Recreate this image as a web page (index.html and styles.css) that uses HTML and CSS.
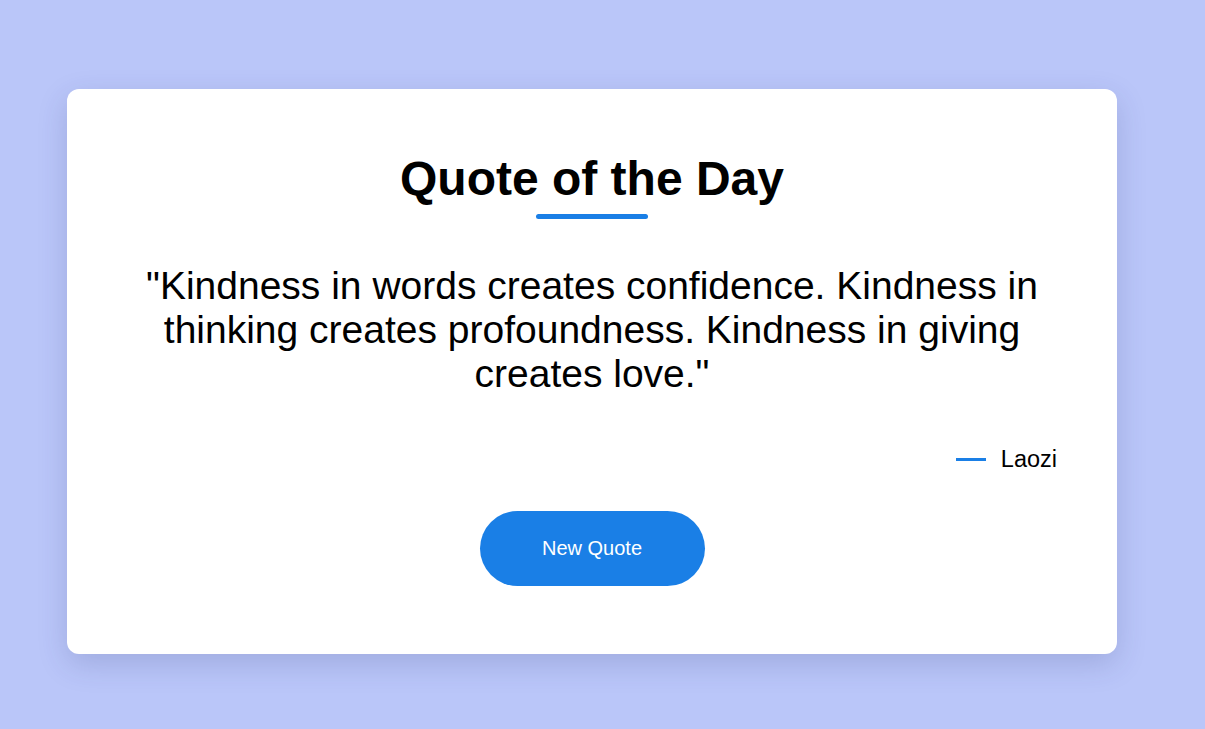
FILE: index.html
```html
<!DOCTYPE html>
<html lang="en">
<head>
<meta charset="utf-8">
<title>Quote of the Day</title>
<link rel="stylesheet" href="styles.css">
</head>
<body>
  <main class="card">
    <h1 class="title">Quote of the Day</h1>
    <p class="quote">"Kindness in words creates confidence. Kindness in thinking creates profoundness. Kindness in giving creates love."</p>
    <p class="author"><span class="dash"></span>Laozi</p>
    <div class="actions">
      <button class="btn" type="button">New Quote</button>
    </div>
  </main>
</body>
</html>
```

FILE: styles.css
```css
* { box-sizing: border-box; }

html, body {
  margin: 0;
  height: 100%;
}

body {
  background: #bac6f9;
  font-family: "Liberation Sans", Arial, sans-serif;
  color: #000;
  display: flex;
  justify-content: center;
  align-items: flex-start;
  padding: 89px 21px 0 0;
}

.card {
  width: 1050px;
  background: #fff;
  border-radius: 12px;
  box-shadow: 0 10px 30px rgba(40, 50, 110, 0.18);
  padding: 62px 60px 68px;
  display: flex;
  flex-direction: column;
}

.title {
  margin: 0;
  font-size: 48px;
  line-height: 55px;
  font-weight: 700;
  text-align: center;
}

.title::after {
  content: "";
  display: block;
  width: 112px;
  height: 5px;
  border-radius: 3px;
  background: #1a7fe6;
  margin: 8px auto 0;
}

.quote {
  margin: 45px 0 0;
  font-size: 39px;
  line-height: 44px;
  text-align: center;
}

.author {
  margin: 50px 0 0;
  font-size: 23.5px;
  line-height: 26px;
  display: flex;
  justify-content: flex-end;
  align-items: center;
}

.dash {
  display: inline-block;
  width: 30px;
  height: 3px;
  background: #1a7fe6;
  margin-right: 15px;
}

.actions {
  margin-top: 39px;
  display: flex;
  justify-content: center;
}

.btn {
  width: 225px;
  height: 75px;
  border: none;
  border-radius: 38px;
  background: #1a7fe6;
  color: #fff;
  font-family: "Liberation Sans", Arial, sans-serif;
  font-size: 20px;
  cursor: pointer;
}
```
